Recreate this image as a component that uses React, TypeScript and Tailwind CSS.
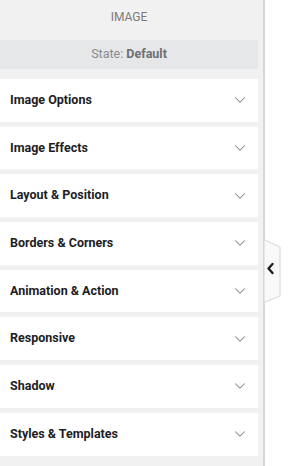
import { ChevronDown } from "lucide-react";

const sections = [
  "Image Options",
  "Image Effects",
  "Layout & Position",
  "Borders & Corners",
  "Animation & Action",
  "Responsive",
  "Shadow",
  "Styles & Templates",
];

const App = () => {
  return (
    <div
      className="relative flex h-[466px] w-[290px] overflow-hidden bg-white"
      style={{ fontFamily: "Roboto, 'Liberation Sans', sans-serif" }}
    >
      {/* Panel */}
      <div className="flex h-full w-[265px] flex-col border-r-2 border-[#d6d6d8] bg-[#f1f1f2] pr-[5px]">
        <div className="flex h-[40px] items-center justify-center pb-[6px] text-[12px] text-[#7b7b7b]">
          IMAGE
        </div>
        <div className="flex h-[29px] items-center justify-center bg-[#e6e7e8] text-[12.5px] text-[#888b8f]">
          State:&nbsp;<span className="font-bold text-[#6d7075]">Default</span>
        </div>
        <div className="mt-[10px] flex flex-col gap-[5px]">
          {sections.map((title) => (
            <div
              key={title}
              className="flex h-[42.7px] items-center justify-between bg-white pl-[10px] pr-[9px]"
            >
              <span className="text-[12.5px] font-bold text-[#1d1d1f]">{title}</span>
              <ChevronDown className="h-[18px] w-[18px] text-[#858585]" strokeWidth={1.4} />
            </div>
          ))}
        </div>
      </div>

      {/* Collapse tab */}
      <div className="absolute left-[263px] top-[239px] h-[64px] w-[18px]">
        <svg width="18" height="64" viewBox="0 0 18 64">
          <polygon
            points="1,0.5 17,8 17,57 1,63.5"
            fill="#f9f9f9"
            stroke="#d6d6d8"
            strokeWidth="1"
          />
          <polyline
            points="9.5,25 5.5,29.5 9.5,34"
            fill="none"
            stroke="#1f1f1f"
            strokeWidth="2.4"
            strokeLinecap="round"
            strokeLinejoin="round"
          />
        </svg>
      </div>
    </div>
  );
};

export default App;
